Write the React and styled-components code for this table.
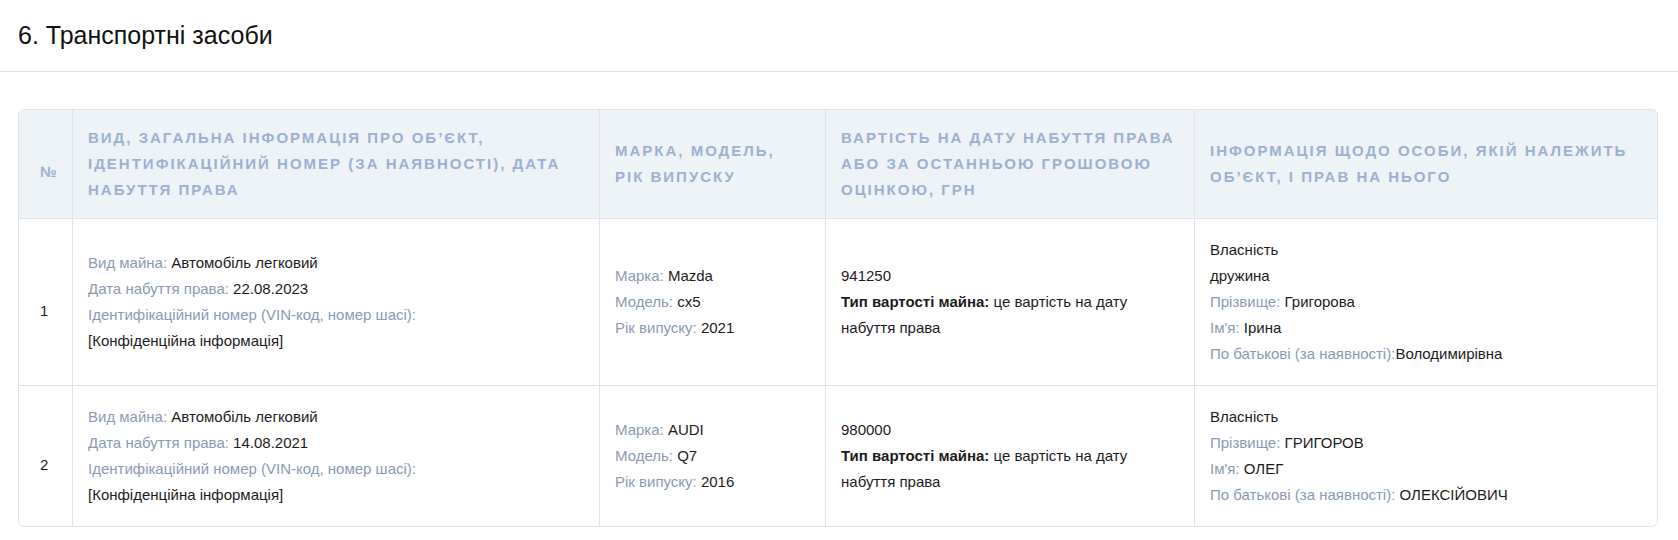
import React from 'react';
import styled, { createGlobalStyle } from 'styled-components';

const GlobalStyle = createGlobalStyle`
    body {
        margin: 0;
        background: #ffffff;
        font-family: "Liberation Sans", Arial, sans-serif;
        color: #1c1c1c;
    }
`

const SectionHeader = styled.div`
    height: 71px;
    display: flex;
    align-items: center;
    padding: 0 18px;
    border-bottom: 1px solid #e2e2e2;
`

const Title = styled.h2`
    margin: 0;
    font-size: 25px;
    font-weight: 400;
    color: #111111;
`

const Content = styled.div`
    padding: 37px 20px 20px 18px;
`

const Table = styled.table`
    width: 1640px;
    table-layout: fixed;
    border-collapse: separate;
    border-spacing: 0;
    border: 1px solid #dfe3e8;
    border-radius: 6px;
    overflow: hidden;
`

const HeadCell = styled.th`
    background: #eef3f8;
    color: #9cb0cf;
    font-size: 15px;
    font-weight: 700;
    text-transform: uppercase;
    letter-spacing: 2px;
    line-height: 26px;
    text-align: left;
    vertical-align: middle;
    padding: 15px ${p => (p.$narrow ? '0 0 21px' : '15px')};
    border-left: ${p => (p.$first ? 'none' : '1px solid #dfe3e8')};
`

const Cell = styled.td`
    font-size: 15px;
    line-height: 26px;
    vertical-align: middle;
    padding: 18px ${p => (p.$narrow ? '0 0 21px' : '15px')};
    border-top: 1px solid #dfe3e8;
    border-left: ${p => (p.$first ? 'none' : '1px solid #dfe3e8')};
`

const Line = styled.div`
    color: #1c1c1c;
`

const Label = styled.span`
    color: #8a9ab5;
`

const Strong = styled.b`
    font-weight: 700;
`

const columns = [
    { width: 53, title: '№', narrow: true },
    { width: 527, title: 'Вид, загальна інформація про об’єкт, ідентифікаційний номер (за наявності), дата набуття права' },
    { width: 226, title: 'Марка, модель, рік випуску' },
    { width: 369, title: 'Вартість на дату набуття права або за останньою грошовою оцінкою, грн' },
    { width: 463, title: 'Інформація щодо особи, якій належить об’єкт, і прав на нього' },
]

const vehicles = [
    {
        num: 1,
        date: '22.08.2023',
        brand: 'Mazda',
        model: 'cx5',
        year: '2021',
        cost: '941250',
        owner: [
            ['', 'Власність'],
            ['', 'дружина'],
            ['Прізвище: ', 'Григорова'],
            ["Ім'я: ", 'Ірина'],
            ['По батькові (за наявності):', 'Володимирівна'],
        ],
    },
    {
        num: 2,
        date: '14.08.2021',
        brand: 'AUDI',
        model: 'Q7',
        year: '2016',
        cost: '980000',
        owner: [
            ['', 'Власність'],
            ['Прізвище: ', 'ГРИГОРОВ'],
            ["Ім'я: ", 'ОЛЕГ'],
            ['По батькові (за наявності): ', 'ОЛЕКСІЙОВИЧ'],
        ],
    },
]

const Field = ({ label, children }) => (
    <Line>
        {label && <Label>{label}</Label>}
        {children}
    </Line>
)

const App = () => {
    return (
        <>
            <GlobalStyle />
            <SectionHeader>
                <Title>6. Транспортні засоби</Title>
            </SectionHeader>
            <Content>
                <Table>
                    <colgroup>
                        {columns.map((c, i) => <col key={i} style={{ width: c.width }} />)}
                    </colgroup>
                    <thead>
                        <tr>
                            {columns.map((c, i) => (
                                <HeadCell key={i} $first={i === 0} $narrow={c.narrow}>{c.title}</HeadCell>
                            ))}
                        </tr>
                    </thead>
                    <tbody>
                        {vehicles.map(v => (
                            <tr key={v.num}>
                                <Cell $first $narrow>{v.num}</Cell>
                                <Cell>
                                    <Field label="Вид майна: ">Автомобіль легковий</Field>
                                    <Field label="Дата набуття права: ">{v.date}</Field>
                                    <Field label="Ідентифікаційний номер (VIN-код, номер шасі): " />
                                    <Field>[Конфіденційна інформація]</Field>
                                </Cell>
                                <Cell>
                                    <Field label="Марка: ">{v.brand}</Field>
                                    <Field label="Модель: ">{v.model}</Field>
                                    <Field label="Рік випуску: ">{v.year}</Field>
                                </Cell>
                                <Cell>
                                    <Line>{v.cost}</Line>
                                    <Line><Strong>Тип вартості майна:</Strong> це вартість на дату набуття права</Line>
                                </Cell>
                                <Cell>
                                    {v.owner.map(([l, val], i) => (
                                        <Field key={i} label={l}>{val}</Field>
                                    ))}
                                </Cell>
                            </tr>
                        ))}
                    </tbody>
                </Table>
            </Content>
        </>
    )
}

export default App
